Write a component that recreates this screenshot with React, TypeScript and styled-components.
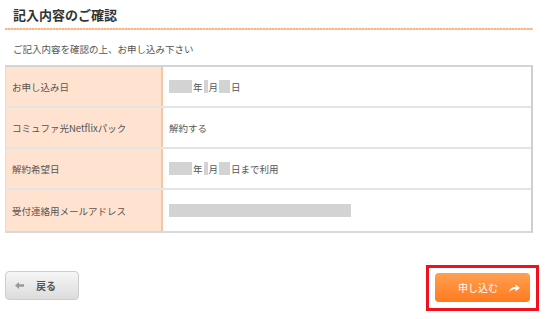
import React from "react";
import styled, { createGlobalStyle } from "styled-components";

const Global = createGlobalStyle`
  html, body { margin: 0; padding: 0; background: #fff; }
  body { font-family: "Noto Sans CJK JP", "Noto Sans", sans-serif; color: #444; }
`;

const Page = styled.div`
  width: 528px;
  margin-left: 5px;
  padding-top: 6px;
`;

const Title = styled.h2`
  margin: 0;
  padding: 0 0 0 8px;
  font-size: 13px;
  line-height: 18px;
  font-weight: 700;
  color: #333;
  height: 22px;
`;

const Dotted = styled.div`
  height: 2px;
  background-image: repeating-linear-gradient(90deg, #ffb383 0 2px, #ffd2b5 2px 3px);
`;

const Lead = styled.p`
  margin: 0;
  padding: 12px 0 0 8px;
  font-size: 9.5px;
  line-height: 14px;
  color: #555;
`;

const Table = styled.div`
  margin-top: 9px;
  border-top: 2px solid #d4d4d4;
  border-bottom: 2px solid #d9d9d9;
  border-left: 1px solid #ddd;
  border-right: 2px solid #cfcfcf;
`;

const Row = styled.div<{ $last?: boolean }>`
  display: grid;
  grid-template-columns: 157px 1fr;
  height: 41px;
  border-bottom: ${(p) => (p.$last ? "none" : "2px solid #e4e4e4")};
  box-sizing: border-box;
`;

const Label = styled.div`
  background: #ffe2cf;
  border-right: 2px solid #f2c7a8;
  display: flex;
  align-items: center;
  padding-left: 6px;
  font-size: 9.5px;
  color: #555;
`;

const Value = styled.div`
  display: flex;
  align-items: center;
  padding-left: 6px;
  font-size: 9.5px;
  color: #555;
`;

const Mask = styled.span<{ $w: number }>`
  display: inline-block;
  width: ${(p) => p.$w}px;
  height: 13px;
  background: #d3d3d3;
`;

const Unit = styled.span`
  margin: 0 1px;
`;

const Actions = styled.div`
  display: flex;
  justify-content: space-between;
  align-items: flex-start;
  margin-top: 32px;
`;

const BackButton = styled.button`
  margin-top: 6px;
  width: 74px;
  height: 29px;
  border: 1px solid #cdcdcd;
  border-radius: 4px;
  background: linear-gradient(#f6f6f6, #dcdcdc);
  display: flex;
  align-items: center;
  padding: 0 0 0 9px;
  gap: 12px;
  font-family: "Noto Sans CJK JP", sans-serif;
  font-size: 10px;
  font-weight: 700;
  color: #555;
  cursor: pointer;
`;

const Highlight = styled.div`
  border: 3px solid #f0101e;
  padding: 5px 6px 6px 6px;
  margin-right: -6px;
`;

const SubmitButton = styled.button`
  width: 95px;
  height: 29px;
  border: none;
  border-radius: 4px;
  background: linear-gradient(#ffa052, #ff7a1f);
  display: flex;
  align-items: center;
  justify-content: space-between;
  padding: 0 10px 0 23px;
  font-family: "Noto Sans CJK JP", sans-serif;
  font-size: 10px;
  color: #fff;
  cursor: pointer;
`;

const LeftArrow = () => (
  <svg width="9" height="7" viewBox="0 0 9 7">
    <path d="M0 3.5 L4 0 V2.2 H9 V4.8 H4 V7 Z" fill="#999" />
  </svg>
);

const ForwardArrow = () => (
  <svg width="11" height="8" viewBox="0 0 11 8">
    <path d="M0 8 C1 4 3.5 3 6.5 3 V0.5 L11 4 L6.5 7.2 V5 C4 5 2 6 0 8 Z" fill="#fff" />
  </svg>
);

export default function App() {
  return (
    <>
      <Global />
      <Page>
        <Title>記入内容のご確認</Title>
        <Dotted />
        <Lead>ご記入内容を確認の上、お申し込み下さい</Lead>
        <Table>
          <Row>
            <Label>お申し込み日</Label>
            <Value>
              <Mask $w={23} />
              <Unit>年</Unit>
              <Mask $w={4} />
              <Unit>月</Unit>
              <Mask $w={11} />
              <Unit>日</Unit>
            </Value>
          </Row>
          <Row>
            <Label>コミュファ光Netflixパック</Label>
            <Value>解約する</Value>
          </Row>
          <Row>
            <Label>解約希望日</Label>
            <Value>
              <Mask $w={23} />
              <Unit>年</Unit>
              <Mask $w={4} />
              <Unit>月</Unit>
              <Mask $w={11} />
              <Unit>日まで利用</Unit>
            </Value>
          </Row>
          <Row $last>
            <Label>受付連絡用メールアドレス</Label>
            <Value>
              <Mask $w={182} />
            </Value>
          </Row>
        </Table>
        <Actions>
          <BackButton>
            <LeftArrow />
            戻る
          </BackButton>
          <Highlight>
            <SubmitButton>
              申し込む
              <ForwardArrow />
            </SubmitButton>
          </Highlight>
        </Actions>
      </Page>
    </>
  );
}
